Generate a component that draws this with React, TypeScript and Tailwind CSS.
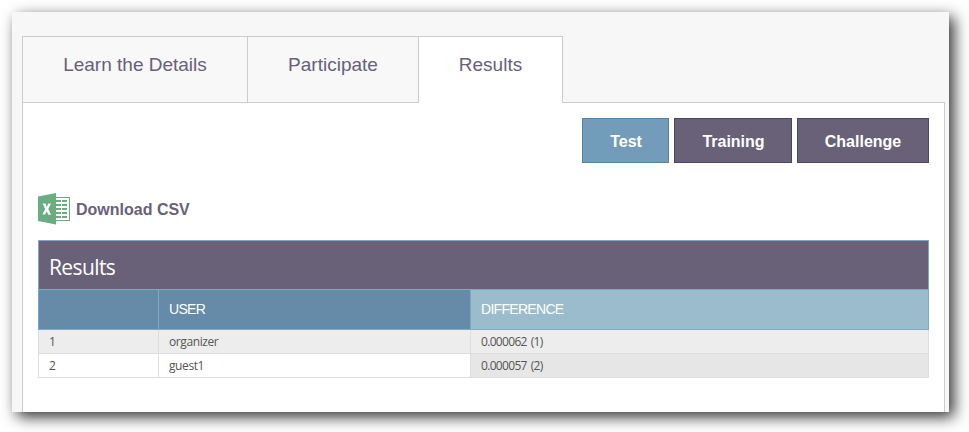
import React from "react";

const tabs = [
  { label: "Learn the Details", className: "w-[225px] border-b bg-[#f8f8f8]" },
  { label: "Participate", className: "w-[171px] border-b bg-[#f8f8f8]" },
  { label: "Results", className: "w-[144px] bg-white" },
];

const phases = [
  { label: "Test", className: "w-[87px] border-[#5085a8] bg-[#739cba] pl-px" },
  { label: "Training", className: "w-[118px] border-[#4c475c] bg-[#686178] pl-px" },
  { label: "Challenge", className: "w-[132px] border-[#4c475c] bg-[#686178]" },
];

const rows = [
  { rank: "1", user: "organizer", score: "0.000062 (1)", left: "bg-[#ededed]", right: "bg-[#ededed]" },
  { rank: "2", user: "guest1", score: "0.000057 (2)", left: "bg-white", right: "bg-[#e6e6e6]" },
];

function SpreadsheetIcon() {
  return (
    <svg width="32" height="32" viewBox="0 0 32 32" className="block shrink-0">
      <rect x="17" y="4.5" width="14.5" height="23" fill="#fff" stroke="#69ad80" />
      <path
        d="M18 7h5v2h-5zM24 7h5v2h-5zM18 11h5v2h-5zM24 11h5v2h-5zM18 15h5v2h-5zM24 15h5v2h-5zM18 19h5v2h-5zM24 19h5v2h-5zM18 23h5v2h-5zM24 23h5v2h-5z"
        fill="#69ad80"
      />
      <path d="M0 3.5L18 0v31.5L0 28z" fill="#69ad80" />
      <path
        d="M4.6 10.6h2.9l1.3 3.3 1.5-3.4h2.7l-2.7 5.6 2.8 5.7h-2.8l-1.6-3.6-1.5 3.4H4.4l2.8-5.5z"
        fill="#fff"
      />
    </svg>
  );
}

export default function App() {
  return (
    <div className="h-[432px] w-[969px] overflow-hidden bg-white p-3 font-['Liberation_Sans',Arial,sans-serif]">
      <div className="flex h-[400px] w-[937px] flex-col bg-[#f7f7f7] pt-6 pr-1 pl-[10px] shadow-[5px_5px_14px_0px_rgba(0,0,0,0.8)]">
        <nav className="flex h-[67px] text-[19px] leading-[28px] text-[#686178]">
          <div className="flex border-l border-[#ccc]">
            {tabs.map((t) => (
              <div key={t.label} className={`border-t border-r border-[#ccc] pt-[14px] text-center ${t.className}`}>
                {t.label}
              </div>
            ))}
          </div>
          <div className="grow border-b border-[#ccc]" />
        </nav>
        <main className="-mt-px flex grow flex-col">
          <div className="flex h-px">
            <div className="w-[397px] bg-[#ccc]" />
            <div className="w-[143px] bg-white" />
            <div className="grow bg-[#ccc]" />
          </div>
          <div className="grow border-x border-[#ccc] bg-white px-[15px] pt-[15px]">
            <div className="flex justify-end gap-[5px]">
              {phases.map((p) => (
                <button
                  key={p.label}
                  className={`flex h-[45px] items-center justify-center border pt-[3px] text-base font-bold text-white ${p.className}`}
                >
                  {p.label}
                </button>
              ))}
            </div>
            <div className="mt-[30px] flex h-[47px] items-start gap-[6px] text-[#686178]">
              <SpreadsheetIcon />
              <span className="pt-[5px] text-base leading-6 font-bold">Download CSV</span>
            </div>
            <table className="w-[891px] table-fixed border-collapse text-left">
              <colgroup>
                <col className="w-[120px]" />
                <col className="w-[312px]" />
                <col />
              </colgroup>
              <thead>
                <tr className="h-[49px]">
                  <th
                    colSpan={3}
                    className="border border-[#7fa9c3] bg-[#686178] px-[10px] pt-1 font-['Open_Sans','Noto_Sans',sans-serif] text-[21px] leading-6 font-normal tracking-[-0.6px] text-white"
                  >
                    Results
                  </th>
                </tr>
                <tr className="h-10 text-sm tracking-[-0.7px] text-white">
                  <th className="border border-[#7fa9c3] bg-[#658ba8]" />
                  <th className="border border-[#7fa9c3] bg-[#658ba8] px-[10px] pt-0 pb-[2px] font-normal">USER</th>
                  <th className="border border-[#7fa9c3] bg-[#9abccd] px-[10px] pt-0 pb-[2px] font-normal">DIFFERENCE</th>
                </tr>
              </thead>
              <tbody className="font-['Open_Sans','Noto_Sans',sans-serif] text-xs leading-4 text-[#555]">
                {rows.map((r) => (
                  <tr key={r.rank} className="h-6">
                    <td className={`border border-[#ddd] px-[10px] py-0 ${r.left}`}>{r.rank}</td>
                    <td className={`border border-[#ddd] px-[10px] py-0 tracking-[-0.4px] ${r.left}`}>{r.user}</td>
                    <td
                      className={`border border-[#ddd] px-[10px] py-0 tracking-[-0.68px] [word-spacing:1.5px] ${r.right}`}
                    >
                      {r.score}
                    </td>
                  </tr>
                ))}
              </tbody>
            </table>
          </div>
        </main>
      </div>
    </div>
  );
}
